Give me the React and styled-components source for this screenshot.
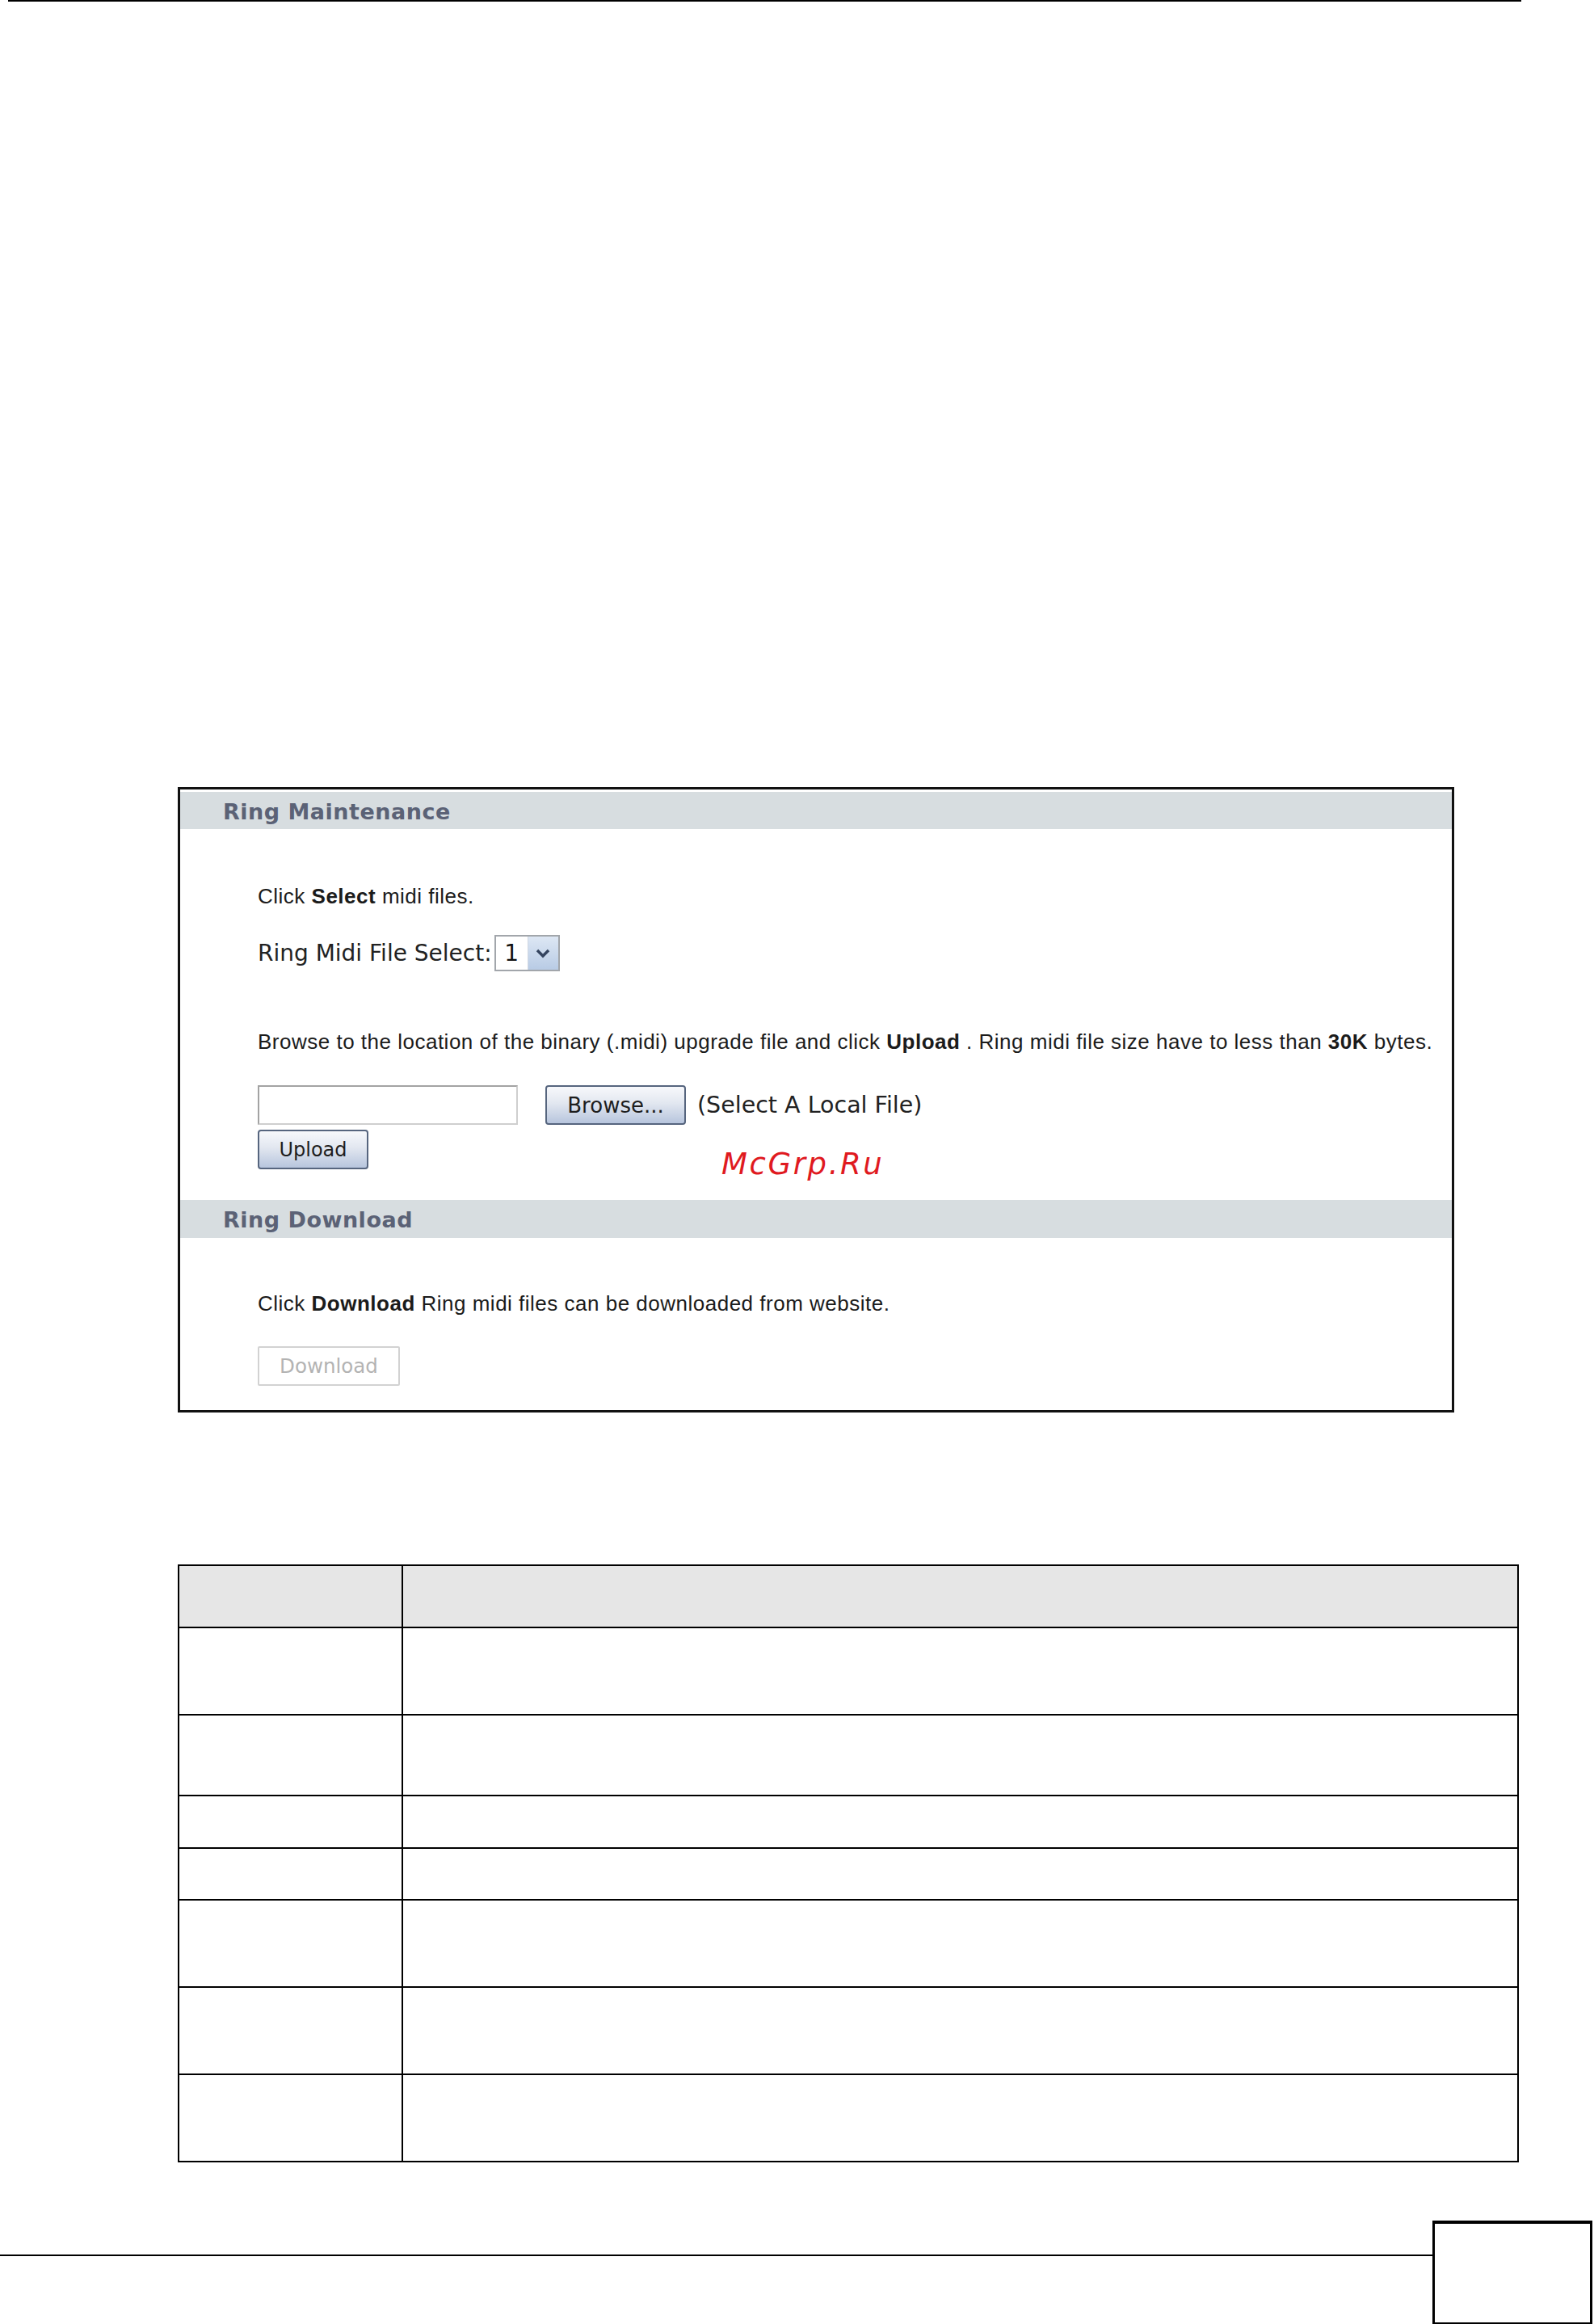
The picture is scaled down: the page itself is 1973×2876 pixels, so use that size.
import React from "react";
import styled, { createGlobalStyle } from "styled-components";

const GlobalStyle = createGlobalStyle`
  html, body {
    margin: 0;
    padding: 0;
    background: #ffffff;
    overflow: hidden;
  }
`;

const rows = [108, 100, 65, 64, 108, 108, 108];

export default function App() {
  return (
    <>
      <GlobalStyle />
      <Page>
        <TopRule />
        <Panel>
          <Band $height={46}>Ring Maintenance</Band>
          <SectionBody>
            <Line $top={68}>
              Click <Strong>Select</Strong> midi files.
            </Line>
            <SelectRow>
              <FieldLabel>Ring Midi File Select:</FieldLabel>
              <SelectBox>
                <SelectValue>1</SelectValue>
                <SelectArrow>
                  <svg width="20" height="14" viewBox="0 0 20 14">
                    <path
                      d="M3 3 L10 10 L17 3"
                      fill="none"
                      stroke="#34445f"
                      strokeWidth="3.4"
                      strokeLinejoin="miter"
                    />
                  </svg>
                </SelectArrow>
              </SelectBox>
            </SelectRow>
            <Line $top={72}>
              Browse to the location of the binary (.midi) upgrade file and
              click <Strong>Upload</Strong> . Ring midi file size have to less
              than <Strong>30K</Strong> bytes.
            </Line>
            <FileRow>
              <FileInput />
              <Button $width={174} $size={26} $gap={34}>
                Browse...
              </Button>
              <Hint>(Select A Local File)</Hint>
            </FileRow>
            <Button $width={137} $size={24} $top={6}>
              Upload
            </Button>
          </SectionBody>
          <Band $height={47} $top={38}>
            Ring Download
          </Band>
          <SectionBody>
            <Line $top={66}>
              Click <Strong>Download</Strong> Ring midi files can be downloaded
              from website.
            </Line>
            <DisabledButton>Download</DisabledButton>
          </SectionBody>
          <Watermark>McGrp.Ru</Watermark>
        </Panel>

        <ParamTable>
          <tbody>
            <HeadRow>
              <LabelCell />
              <Cell />
            </HeadRow>
            {rows.map((h, i) => (
              <Row key={i} $height={h}>
                <LabelCell />
                <Cell />
              </Row>
            ))}
          </tbody>
        </ParamTable>

        <Footer>
          <FooterRule />
          <PageBox />
        </Footer>
      </Page>
    </>
  );
}

const Page = styled.div`
  width: 1973px;
  height: 2876px;
  font-family: "Liberation Sans", Arial, sans-serif;
  color: #1b1b1b;
`;

const TopRule = styled.div`
  margin-left: 10px;
  width: 1873px;
  height: 2px;
  background: #000;
`;

const Panel = styled.section`
  position: relative;
  box-sizing: border-box;
  margin: 972px 0 0 220px;
  width: 1580px;
  height: 774px;
  padding-top: 3px;
  border: 3px solid #111;
`;

const Band = styled.h2`
  box-sizing: border-box;
  display: flex;
  align-items: center;
  height: ${(p) => p.$height}px;
  margin: ${(p) => p.$top || 0}px 0 0 0;
  padding: 2px 0 0 53px;
  background: #d7dde0;
  color: #5b6276;
  font-family: "DejaVu Sans", Verdana, sans-serif;
  font-weight: 700;
  font-size: 27px;
  letter-spacing: 0.5px;
`;

const SectionBody = styled.div`
  padding-left: 96px;
`;

const Line = styled.p`
  margin: ${(p) => p.$top}px 0 0 0;
  font-size: 26px;
  line-height: 30px;
  letter-spacing: 0.5px;
  white-space: nowrap;
`;

const Strong = styled.b`
  font-weight: 700;
`;

const SelectRow = styled.div`
  display: flex;
  align-items: center;
  height: 45px;
  margin-top: 33px;
`;

const FieldLabel = styled.span`
  font-family: "DejaVu Sans", Verdana, sans-serif;
  font-size: 28px;
  color: #222;
`;

const SelectBox = styled.div`
  box-sizing: border-box;
  display: flex;
  width: 81px;
  height: 45px;
  margin-left: 3px;
  border: 2px solid #a2a6ab;
  background: #fff;
`;

const SelectValue = styled.span`
  display: flex;
  align-items: center;
  justify-content: center;
  width: 39px;
  font-family: "DejaVu Sans", Verdana, sans-serif;
  font-size: 28px;
  color: #111;
`;

const SelectArrow = styled.span`
  flex: 1;
  display: flex;
  align-items: center;
  justify-content: center;
  border-left: 1px solid #cfd7e2;
  background: linear-gradient(#dde7f4, #b8cbe5);
`;

const FileRow = styled.div`
  display: flex;
  align-items: center;
  margin-top: 39px;
`;

const FileInput = styled.div`
  box-sizing: border-box;
  width: 322px;
  height: 49px;
  border: 2px solid;
  border-color: #a3a3a3 #cfcfcf #cfcfcf #a3a3a3;
  background: #fff;
`;

const Button = styled.button`
  box-sizing: border-box;
  display: flex;
  align-items: center;
  justify-content: center;
  width: ${(p) => p.$width}px;
  height: 49px;
  margin: ${(p) => p.$top || 0}px 0 0 ${(p) => p.$gap || 0}px;
  padding: 0;
  border: 2px solid #56657e;
  border-radius: 4px;
  background: linear-gradient(#f7f8fb, #e2e7f0 45%, #b7c5dd);
  font-family: "DejaVu Sans", Verdana, sans-serif;
  font-size: ${(p) => p.$size}px;
  color: #1e1e1e;
`;

const DisabledButton = styled.button`
  box-sizing: border-box;
  display: flex;
  align-items: center;
  justify-content: center;
  width: 176px;
  height: 49px;
  margin-top: 38px;
  padding: 0;
  border: 2px solid #d2d2d2;
  border-radius: 2px;
  background: #fff;
  font-family: "DejaVu Sans", Verdana, sans-serif;
  font-size: 24.5px;
  color: #b3b3b3;
`;

const Hint = styled.span`
  margin-left: 14px;
  font-family: "DejaVu Sans", Verdana, sans-serif;
  font-size: 28.5px;
  color: #222;
`;

const Watermark = styled.span`
  position: absolute;
  left: 670px;
  top: 445px;
  font-family: "DejaVu Sans", Verdana, sans-serif;
  font-style: italic;
  font-size: 37px;
  line-height: 37px;
  letter-spacing: 2.6px;
  color: #e01a1f;
`;

const ParamTable = styled.table`
  margin: 188px 0 0 220px;
  width: 1660px;
  height: 738px;
  border-collapse: collapse;
  table-layout: fixed;
`;

const Row = styled.tr`
  height: ${(p) => p.$height}px;
`;

const HeadRow = styled.tr`
  height: 77px;
  background: #e6e6e6;
`;

const Cell = styled.td`
  padding: 0;
  border: 2px solid #000;
`;

const LabelCell = styled(Cell)`
  width: 275px;
`;

const Footer = styled.footer`
  display: flex;
  align-items: flex-start;
  width: 1971px;
  margin-top: 72px;
`;

const FooterRule = styled.div`
  flex: 1;
  height: 2px;
  margin-top: 42px;
  background: #000;
`;

const PageBox = styled.div`
  box-sizing: border-box;
  width: 198px;
  height: 130px;
  border-style: solid;
  border-color: #000;
  border-width: 4px 3px 4px 3px;
`;
